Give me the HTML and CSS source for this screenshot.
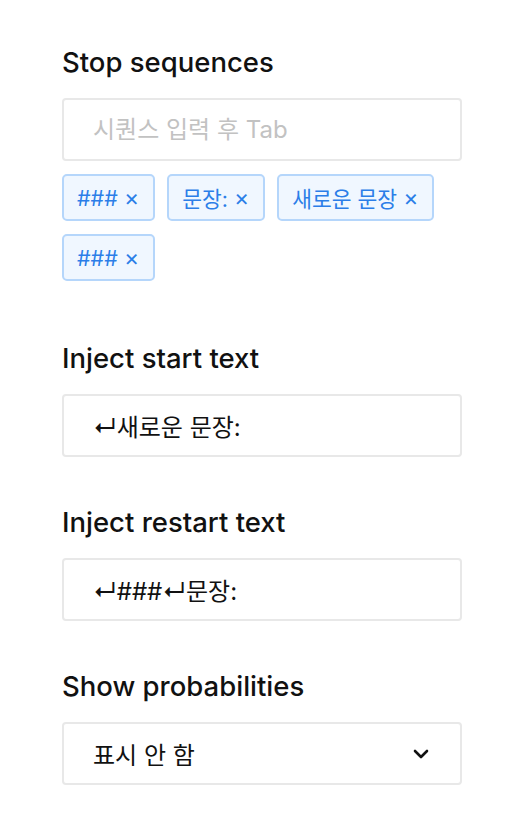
FILE: index.html
```html
<!DOCTYPE html>
<html lang="ko">
<head>
    <meta charset="UTF-8">
    <meta name="viewport" content="width=device-width, initial-scale=1.0">
    <title>Generation settings</title>
    <link rel="stylesheet" href="styles.css">
</head>
<body>
    <div class="settings">
        <div class="field">
            <label class="field-label">Stop sequences</label>
            <input class="text-input" type="text" placeholder="시퀀스 입력 후 Tab">
            <div class="tag-list">
                <span class="tag">### <span class="tag-x">×</span></span>
                <span class="tag">문장: <span class="tag-x">×</span></span>
                <span class="tag">새로운 문장 <span class="tag-x">×</span></span>
                <span class="tag">### <span class="tag-x">×</span></span>
            </div>
        </div>

        <div class="field">
            <label class="field-label">Inject start text</label>
            <input class="text-input" type="text" value="↵새로운 문장:">
        </div>

        <div class="field">
            <label class="field-label">Inject restart text</label>
            <input class="text-input" type="text" value="↵###↵문장:">
        </div>

        <div class="field">
            <label class="field-label">Show probabilities</label>
            <div class="select">
                <span>표시 안 함</span>
                <svg class="chevron" width="16" height="10" viewBox="0 0 16 10">
                    <path d="M2 2 L8 8 L14 2" fill="none" stroke="#111" stroke-width="2.6" stroke-linecap="round" stroke-linejoin="round"/>
                </svg>
            </div>
        </div>
    </div>
</body>
</html>
```

FILE: styles.css
```css
body {
    margin: 0;
    background: white;
    color: #111;
    font-family: Inter, "Noto Sans CJK KR", sans-serif;
}
.settings {
    width: 400px;
    padding: 44px 0 0 62px;
}
.field {
    margin-bottom: 47px;
}
.field-label {
    display: block;
    font-size: 27.5px;
    line-height: 36px;
    font-weight: 500;
    margin-bottom: 18px;
}
.text-input,
.select {
    box-sizing: border-box;
    width: 400px;
    height: 63px;
    padding: 0 30px 0 29px;
    border: 2px solid #e8e8e8;
    border-radius: 4px;
    font-family: Inter, "Noto Sans CJK KR", sans-serif;
    font-size: 24px;
    color: #111;
    background: white;
    outline: none;
}
.text-input::placeholder {
    color: #c2c2c2;
}
.select {
    display: flex;
    align-items: center;
    justify-content: space-between;
    padding-right: 31px;
}
.tag-list {
    display: flex;
    flex-wrap: wrap;
    gap: 13px 12px;
    margin-top: 13px;
    padding-bottom: 12px;
}
.tag {
    box-sizing: border-box;
    height: 47px;
    display: inline-flex;
    align-items: center;
    padding: 0 14px 0 13px;
    border: 2px solid #b5d6fb;
    border-radius: 5px;
    background: #f0f7ff;
    color: #2b7ee8;
    font-size: 21.5px;
    white-space: pre;
}
.tag-x {
    font-size: 23px;
}
```
